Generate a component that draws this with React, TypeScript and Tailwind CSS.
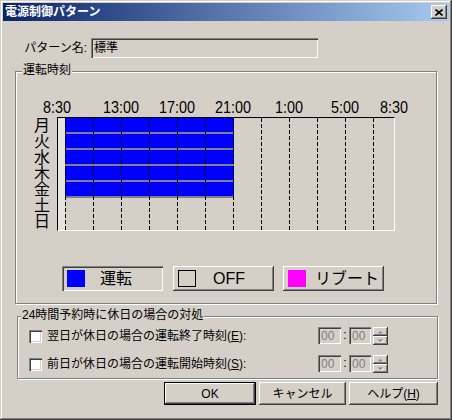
import type { ReactNode } from 'react'

// classic 3D edges
const RAISED = 'shadow-[inset_-1px_-1px_0_#404040,inset_1px_1px_0_#fff,inset_-2px_-2px_0_#808080]'
const SUNKEN = 'shadow-[inset_1px_1px_0_#808080,inset_2px_2px_0_#404040,inset_-1px_-1px_0_#fff,inset_-2px_-2px_0_#d4d0c8]'
const ETCHED = 'border border-[#808080] shadow-[inset_1px_1px_0_#fff,1px_1px_0_#fff]'

const TIME_LABELS: [string, number][] = [
  ['8:30', 0],
  ['13:00', 64],
  ['17:00', 120],
  ['21:00', 176],
  ['1:00', 232],
  ['5:00', 288],
  ['8:30', 337],
]

const DAYS = ['月', '火', '水', '木', '金', '土', '日']

function ScheduleGrid() {
  // 14px per hour, 8:30 at x=0
  const lines = Array.from({ length: 12 }, (_, i) => 7 + i * 28)
  const weekdays = [0, 1, 2, 3, 4]
  return (
    <svg width="336" height="112" className="block">
      <rect x="0" y="0" width="7" height="112" fill="#e6e3dc" />
      {weekdays.map((r) => (
        <g key={r}>
          <rect x="7" y={r * 16} width="169" height="14" fill="#0000ff" />
          <rect x="7" y={r * 16 + 14} width="169" height="2" fill="#808080" />
        </g>
      ))}
      {lines.map((x) => (
        <line
          key={x}
          x1={x + 0.5}
          y1="0"
          x2={x + 0.5}
          y2="112"
          stroke="#000"
          strokeWidth="1"
          strokeDasharray="4 2"
          shapeRendering="crispEdges"
        />
      ))}
    </svg>
  )
}

function GroupBox({ title, className, titleClass, children }: { title: string; className: string; titleClass: string; children: ReactNode }) {
  return (
    <div className={`relative ${ETCHED} ${className}`}>
      <span className={`absolute top-[-9px] bg-[#d4d0c8] px-[1px] text-[12px] leading-[14px] whitespace-nowrap ${titleClass}`}>
        {title}
      </span>
      {children}
    </div>
  )
}

function LegendButton({ pressed, swatch, label, gap, labelClass }: { pressed?: boolean; swatch: string; label: string; gap: string; labelClass: string }) {
  return (
    <div className={`flex h-[25px] w-[101px] items-center pl-[5px] ${pressed ? SUNKEN : RAISED}`}>
      <div className={`h-[17px] w-[18px] shrink-0 ${swatch}`} />
      <span className={`${gap} ${labelClass} text-[16px] leading-[18px] whitespace-nowrap`}>{label}</span>
    </div>
  )
}

function Arrow({ up }: { up?: boolean }) {
  return (
    <svg width="7" height="4" className="block">
      <polygon points={up ? '1.5,4 6.5,4 4,1.5' : '1.5,1 6.5,1 4,3.5'} fill="#fff" transform="translate(0.5,0.5)" />
      <polygon points={up ? '1,3.5 6,3.5 3.5,1' : '1,0.5 6,0.5 3.5,3'} fill="#808080" />
    </svg>
  )
}

function TimeSpin() {
  return (
    <div className="flex items-start self-start">
      <div className={`flex h-[17px] w-[23px] items-center pl-[3px] text-[12px] text-[#808080] ${SUNKEN}`}>00</div>
      <div className="w-[8px] text-center text-[12px] leading-[17px]">:</div>
      <div className={`flex h-[17px] w-[22px] items-center pl-[3px] text-[12px] text-[#808080] ${SUNKEN}`}>00</div>
      <div className="ml-[2px] flex h-[18px] w-[15px] flex-col">
        <div className={`flex h-[9px] items-center justify-center ${RAISED}`}>
          <Arrow up />
        </div>
        <div className={`flex h-[9px] items-center justify-center ${RAISED}`}>
          <Arrow />
        </div>
      </div>
    </div>
  )
}

function CheckRow({ label, hotkey, className }: { label: string; hotkey: string; className?: string }) {
  return (
    <div className={`flex h-[18px] items-center ${className ?? ''}`}>
      <div className={`ml-[11px] h-[13px] w-[13px] shrink-0 bg-white ${SUNKEN}`} />
      <span className="ml-[5px] w-[271px] text-[12px] leading-[14px] whitespace-nowrap">
        {label}(<span className="underline">{hotkey}</span>):
      </span>
      <TimeSpin />
    </div>
  )
}

function PushButton({ children, className }: { children: ReactNode; className: string }) {
  return (
    <div className={`flex h-[23px] items-center justify-center text-[12px] ${className}`}>{children}</div>
  )
}

export default function App() {
  return (
    <div
      className={`flex h-[420px] w-[452px] flex-col bg-[#d4d0c8] p-[3px] text-black font-['Liberation_Sans','Noto_Sans_CJK_JP',sans-serif] shadow-[inset_-1px_-1px_0_#404040,inset_1px_1px_0_#d4d0c8,inset_-2px_-2px_0_#808080,inset_2px_2px_0_#fff]`}
    >
      {/* title bar */}
      <div className="flex h-[18px] shrink-0 items-center bg-[linear-gradient(to_right,#0a246a,#a6caf0)] pl-[2px]">
        <span className="text-[12px] font-bold leading-[14px] text-white">電源制御パターン</span>
        <div className={`ml-auto mr-[2px] flex h-[14px] w-[16px] items-center justify-center bg-[#d4d0c8] ${RAISED}`}>
          <svg width="8" height="7" className="block">
            <path d="M0.5 0.5 L7.5 6.5 M7.5 0.5 L0.5 6.5" stroke="#000" strokeWidth="1.6" />
          </svg>
        </div>
      </div>

      {/* pattern name */}
      <div className="mt-[17px] flex h-[20px] items-center">
        <span className="w-[84px] text-right text-[12px] leading-[14px]">パターン名:</span>
        <div className={`ml-[4px] flex h-[20px] w-[227px] items-center pl-[3px] text-[12px] ${SUNKEN}`}>標準</div>
      </div>

      {/* schedule */}
      <GroupBox title="運転時刻" className="ml-[12px] mt-[13px] h-[233px] w-[422px] shrink-0 pt-[28px]" titleClass="left-[6px]">
        <div className="flex">
          <div className="ml-[18px] flex w-[16px] flex-col pt-[18px]">
            {DAYS.map((d) => (
              <span key={d} className="h-[16px] text-center text-[16px] leading-[16px]">
                {d}
              </span>
            ))}
          </div>
          <div className="ml-[7px] flex flex-col">
            <div className="relative h-[16px]">
              {TIME_LABELS.map(([t, x], i) => (
                <span
                  key={i}
                  className="absolute top-0 -translate-x-1/2 scale-x-90 text-[16px] leading-[16px] whitespace-nowrap"
                  style={{ left: x }}
                >
                  {t}
                </span>
              ))}
            </div>
            <div className="mt-[1px] h-[114px] w-[338px] border border-t-black border-l-black border-r-white border-b-white">
              <ScheduleGrid />
            </div>
          </div>
        </div>

        <div className="ml-[46px] mt-[35px] flex">
          <LegendButton pressed swatch="bg-[#0000ff]" label="運転" gap="ml-[15px]" labelClass="" />
          <div className="ml-[10px]">
            <LegendButton swatch="border border-black" label="OFF" gap="ml-[17px]" labelClass="" />
          </div>
          <div className="ml-[9px]">
            <LegendButton swatch="bg-[#ff00ff]" label="リブート" gap="ml-[9px]" labelClass="" />
          </div>
        </div>
      </GroupBox>

      {/* holiday handling */}
      <GroupBox
        title="24時間予約時に休日の場合の対処"
        className="ml-[14px] mt-[12px] h-[63px] w-[421px] shrink-0 pt-[10px]"
        titleClass="left-[3px]"
      >
        <CheckRow label="翌日が休日の場合の運転終了時刻" hotkey="E" />
        <CheckRow label="前日が休日の場合の運転開始時刻" hotkey="S" className="mt-[10px]" />
      </GroupBox>

      {/* dialog buttons */}
      <div className="ml-[161px] mt-[3px] flex">
        <PushButton className={`w-[92px] border border-black ${RAISED}`}>OK</PushButton>
        <PushButton className={`ml-[3px] w-[87px] ${RAISED}`}>キャンセル</PushButton>
        <PushButton className={`ml-[3px] w-[89px] ${RAISED}`}>
          ヘルプ(<span className="underline">H</span>)
        </PushButton>
      </div>
    </div>
  )
}
